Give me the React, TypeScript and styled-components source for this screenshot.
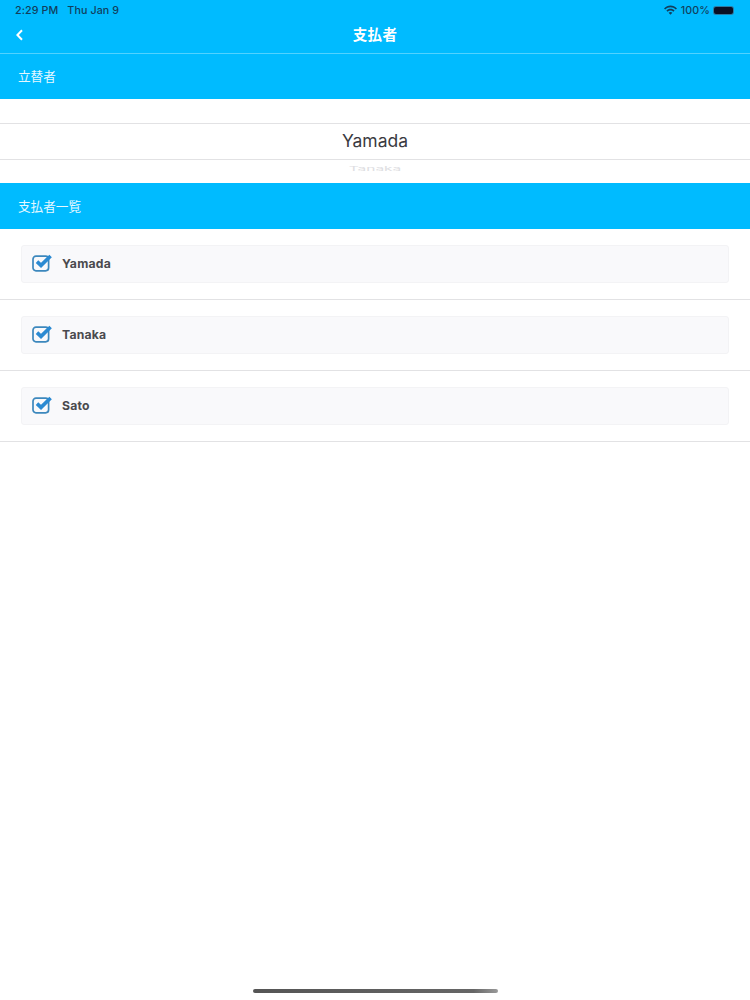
import React from "react";
import styled, {createGlobalStyle} from "styled-components";

const colorBlue = "#00bbff";
const fontStack = `Inter, "Liberation Sans", "Noto Sans CJK JP", sans-serif`;

const GlobalStyle = createGlobalStyle`
    html, body {
        margin: 0;
        padding: 0;
        background: #ffffff;
    }
    * {
        box-sizing: border-box;
    }
`

const Screen = styled.div`
    display: flex;
    flex-direction: column;
    width: 750px;
    height: 1000px;
    overflow: hidden;
    font-family: ${fontStack};
    background: #ffffff;
`

const Header = styled.div`
    height: 54px;
    background-color: ${colorBlue};
    border-bottom: 1px solid #52d2ff;
`

const StatusBar = styled.div`
    display: flex;
    align-items: center;
    height: 20px;
    padding: 0 17px 0 15px;
    font-size: 10.7px;
    font-weight: 500;
    letter-spacing: 0.1px;
    color: #123e5c;
`

const StatusTime = styled.span`
    margin-right: 9px;
`

const StatusRight = styled.div`
    display: flex;
    align-items: center;
    gap: 4px;
    margin-left: auto;
`

const Battery = styled.div`
    width: 19px;
    height: 7px;
    border-radius: 2px;
    background: #0a0f24;
    box-shadow: 0 0 0 1px #2d7aa3;
`

const NavBar = styled.div`
    display: grid;
    grid-template-columns: 60px 1fr 60px;
    align-items: center;
    height: 29px;
    padding-bottom: 2px;
    color: #ffffff;
`

const BackButton = styled.div`
    display: flex;
    padding: 2px 0 0 15px;
`

const NavTitle = styled.div`
    text-align: center;
    font-size: 14.5px;
    font-weight: 700;
    letter-spacing: 0.4px;
`

const SectionHeader = styled.div`
    display: flex;
    align-items: center;
    height: 45px;
    padding: 0 0 2px 18px;
    font-size: 12.6px;
    color: #e6f8ff;
    background-color: ${colorBlue};
`

const ListHeader = styled(SectionHeader)`
    height: 46px;
`

const Picker = styled.div`
    display: flex;
    flex-direction: column;
    height: 84px;
    padding-top: 24px;
    background: #ffffff;
`

const PickerSelected = styled.div`
    display: flex;
    flex: none;
    align-items: center;
    justify-content: center;
    height: 37px;
    padding-bottom: 2px;
    font-size: 17.5px;
    color: #3a3a3f;
    border-top: 1px solid #e2e2e4;
    border-bottom: 1px solid #e2e2e4;
`

const PickerNext = styled.div`
    flex: none;
    margin-top: 7px;
    text-align: center;
    font-size: 15.5px;
    line-height: 12px;
    color: #dedee2;
    transform: scaleY(0.4);
    transform-origin: top;
`

const Row = styled.div`
    display: flex;
    height: 71px;
    padding: 16px 21px 0;
    border-bottom: 1px solid #e2e2e4;
`

const Card = styled.label`
    display: flex;
    align-items: center;
    gap: 9px;
    width: 100%;
    height: 38px;
    padding: 0 0 2px 10px;
    background: #f9f9fb;
    border: 1px solid #f3f3f5;
    border-radius: 3px;
`

const Name = styled.span`
    font-size: 12.2px;
    font-weight: 700;
    letter-spacing: 0.2px;
    color: #4a4a4e;
`

const Spacer = styled.div`
    flex: 1;
`

const HomeIndicator = styled.div`
    flex: none;
    align-self: center;
    width: 245px;
    height: 4px;
    margin-bottom: 7px;
    border-radius: 2px;
    background: linear-gradient(to right, #555555, #666666 90%, #9a9a9a);
`

function CheckIcon() {
    return <svg width="21" height="18" viewBox="0 0 21 18" fill="none">
        <rect x="1" y="2.2" width="15.6" height="14.6" rx="3" stroke="#3d88bd" strokeWidth="1.7"/>
        <path d="M5 7.6 L9 11.4 L18.6 2" stroke="#2b8ad2" strokeWidth="3.6"/>
    </svg>
}

function WifiIcon() {
    return <svg width="13" height="10" viewBox="0 0 13 10" fill="#123e5c">
        <path d="M0 3.4 C3.6 -0.6 9.4 -0.6 13 3.4 L11.8 4.6 C8.8 1.4 4.2 1.4 1.2 4.6 Z"/>
        <path d="M2.4 5.6 C4.6 3.2 8.4 3.2 10.6 5.6 L9.4 6.8 C7.8 5.2 5.2 5.2 3.6 6.8 Z"/>
        <path d="M4.6 7.8 C5.6 6.8 7.4 6.8 8.4 7.8 L6.5 9.8 Z"/>
    </svg>
}

function BackIcon() {
    return <svg width="9" height="12" viewBox="0 0 9 12" fill="none">
        <path d="M7 1.2 L2.4 6 L7 10.8" stroke="#ffffff" strokeWidth="2"/>
    </svg>
}

const payers = ["Yamada", "Tanaka", "Sato"];

export default function App(): React.ReactElement {
    return <Screen>
        <GlobalStyle/>
        <Header>
            <StatusBar>
                <StatusTime>2:29 PM</StatusTime>
                <span>Thu Jan 9</span>
                <StatusRight>
                    <WifiIcon/>
                    <span>100%</span>
                    <Battery/>
                </StatusRight>
            </StatusBar>
            <NavBar>
                <BackButton><BackIcon/></BackButton>
                <NavTitle>支払者</NavTitle>
            </NavBar>
        </Header>
        <SectionHeader>立替者</SectionHeader>
        <Picker>
            <PickerSelected>Yamada</PickerSelected>
            <PickerNext>Tanaka</PickerNext>
        </Picker>
        <ListHeader>支払者一覧</ListHeader>
        {payers.map(name => <Row key={name}>
            <Card>
                <CheckIcon/>
                <Name>{name}</Name>
            </Card>
        </Row>)}
        <Spacer/>
        <HomeIndicator/>
    </Screen>
}
